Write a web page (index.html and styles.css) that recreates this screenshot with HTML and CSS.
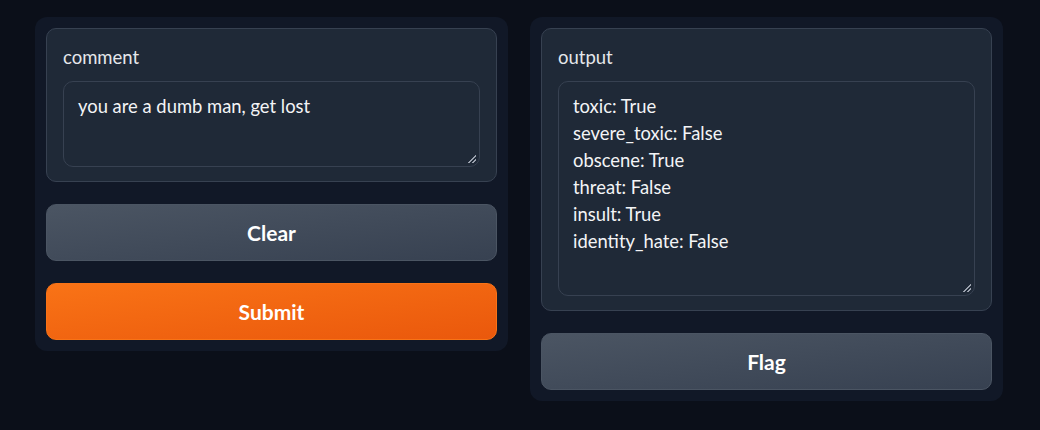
FILE: index.html
```html
<!DOCTYPE html>
<html>
<head>
<meta charset="utf-8">
<link rel="stylesheet" href="styles.css">
</head>
<body>
<div class="app">
  <div class="panel">
    <div class="block">
      <label class="label">comment</label>
      <div class="textarea in-box">you are a dumb man, get lost<span class="grip"></span></div>
    </div>
    <button class="btn secondary">Clear</button>
    <button class="btn primary">Submit</button>
  </div>
  <div class="panel">
    <div class="block">
      <label class="label">output</label>
      <div class="textarea out-box">toxic: True<br>severe_toxic: False<br>obscene: True<br>threat: False<br>insult: True<br>identity_hate: False<span class="grip"></span></div>
    </div>
    <button class="btn secondary">Flag</button>
  </div>
</div>
</body>
</html>
```

FILE: styles.css
```css
html, body {
  margin: 0;
  padding: 0;
  background: #0b0f19;
}
body {
  font-family: "Lato", "Noto Sans", sans-serif;
  color: #e5e7eb;
}
.app {
  display: flex;
  align-items: flex-start;
  gap: 22px;
  padding: 17px 37px 0 35px;
}
.panel {
  flex: 1;
  background: #111827;
  border-radius: 12px;
  padding: 11px;
  display: flex;
  flex-direction: column;
  gap: 22px;
}
.block {
  background: #1f2937;
  border: 1px solid #374151;
  border-radius: 10px;
  padding: 16px 16px 14px 16px;
  display: flex;
  flex-direction: column;
}
.label {
  font-size: 18.5px;
  line-height: 24px;
  color: #e5e7eb;
  margin-bottom: 12px;
}
.textarea {
  position: relative;
  border: 1px solid #374151;
  border-radius: 10px;
  background: #1f2937;
  padding: 11px 14px 9px 14px;
  font-size: 18.4px;
  line-height: 27px;
  color: #f3f4f6;
}
.in-box { height: 64px; }
.out-box { height: 193px; }
.grip {
  position: absolute;
  right: 3px;
  bottom: 3px;
  width: 8px;
  height: 8px;
  background: linear-gradient(135deg, transparent 45%, #9ca3af 45%, #9ca3af 60%, transparent 60%, transparent 72%, #9ca3af 72%, #9ca3af 85%, transparent 85%);
}
.btn {
  height: 57px;
  border-radius: 10px;
  font-family: inherit;
  font-size: 21px;
  font-weight: 700;
  color: #ffffff;
  cursor: pointer;
}
.secondary {
  background: linear-gradient(to bottom right, #4b5563, #374151);
  border: 1px solid #4b5563;
}
.primary {
  background: linear-gradient(to bottom right, #f97316, #ea580c);
  border: 1px solid #f97316;
}
```
